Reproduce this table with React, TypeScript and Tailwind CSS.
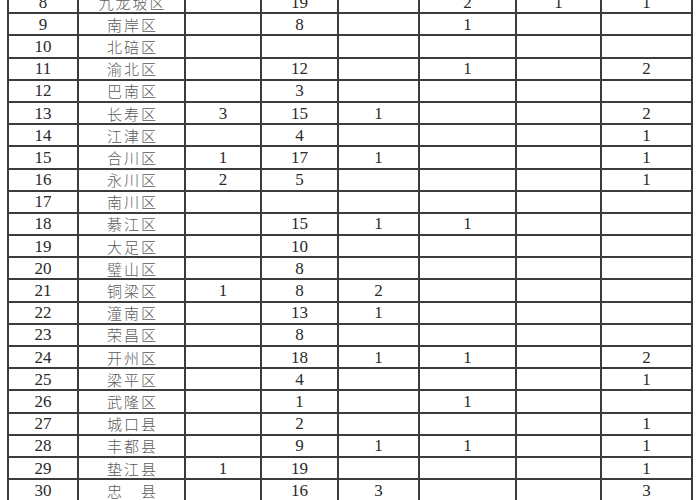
import React from "react";

type Row = {
  no: number;
  name: string;
  cells: (string | number)[];
};

// c3..c8 columns after the district name
const rows: Row[] = [
  { no: 8, name: "九龙坡区", cells: ["", 19, "", 2, 1, 1] },
  { no: 9, name: "南岸区", cells: ["", 8, "", 1, "", ""] },
  { no: 10, name: "北碚区", cells: ["", "", "", "", "", ""] },
  { no: 11, name: "渝北区", cells: ["", 12, "", 1, "", 2] },
  { no: 12, name: "巴南区", cells: ["", 3, "", "", "", ""] },
  { no: 13, name: "长寿区", cells: [3, 15, 1, "", "", 2] },
  { no: 14, name: "江津区", cells: ["", 4, "", "", "", 1] },
  { no: 15, name: "合川区", cells: [1, 17, 1, "", "", 1] },
  { no: 16, name: "永川区", cells: [2, 5, "", "", "", 1] },
  { no: 17, name: "南川区", cells: ["", "", "", "", "", ""] },
  { no: 18, name: "綦江区", cells: ["", 15, 1, 1, "", ""] },
  { no: 19, name: "大足区", cells: ["", 10, "", "", "", ""] },
  { no: 20, name: "璧山区", cells: ["", 8, "", "", "", ""] },
  { no: 21, name: "铜梁区", cells: [1, 8, 2, "", "", ""] },
  { no: 22, name: "潼南区", cells: ["", 13, 1, "", "", ""] },
  { no: 23, name: "荣昌区", cells: ["", 8, "", "", "", ""] },
  { no: 24, name: "开州区", cells: ["", 18, 1, 1, "", 2] },
  { no: 25, name: "梁平区", cells: ["", 4, "", "", "", 1] },
  { no: 26, name: "武隆区", cells: ["", 1, "", 1, "", ""] },
  { no: 27, name: "城口县", cells: ["", 2, "", "", "", 1] },
  { no: 28, name: "丰都县", cells: ["", 9, 1, 1, "", 1] },
  { no: 29, name: "垫江县", cells: [1, 19, "", "", "", 1] },
  { no: 30, name: "忠　县", cells: ["", 16, 3, "", "", 3] },
];

const widths = ["w-[70px]", "w-[107px]", "w-[76px]", "w-[77px]", "w-[81px]", "w-[97px]", "w-[85px]", "w-[91px]"];

export default function App() {
  return (
    <div className="h-[500px] w-[700px] overflow-hidden bg-white">
      <table
        className="ml-[7px] mt-[-10px] w-[686px] table-fixed border-collapse text-[17px] text-[#2a2a2a]"
        style={{ fontFamily: '"Liberation Serif", "Noto Sans CJK SC", serif' }}
      >
        <colgroup>
          {widths.map((w, i) => (
            <col key={i} className={w} />
          ))}
        </colgroup>
        <tbody>
          {rows.map((r) => (
            <tr key={r.no} className="h-[22.2px]">
              <td className="border-2 border-[#3c3c3c] p-0 text-center leading-none">{r.no}</td>
              <td
                className="border-2 border-[#3c3c3c] p-0 pl-[2px] text-center text-[15px] font-light leading-none tracking-[2px] text-[#5a5a5a]"
                style={{ fontFamily: '"Noto Sans CJK SC", sans-serif' }}
              >
                {r.name}
              </td>
              {r.cells.map((c, i) => (
                <td key={i} className="border-2 border-[#3c3c3c] p-0 text-center leading-none">
                  {c}
                </td>
              ))}
            </tr>
          ))}
        </tbody>
      </table>
    </div>
  );
}
